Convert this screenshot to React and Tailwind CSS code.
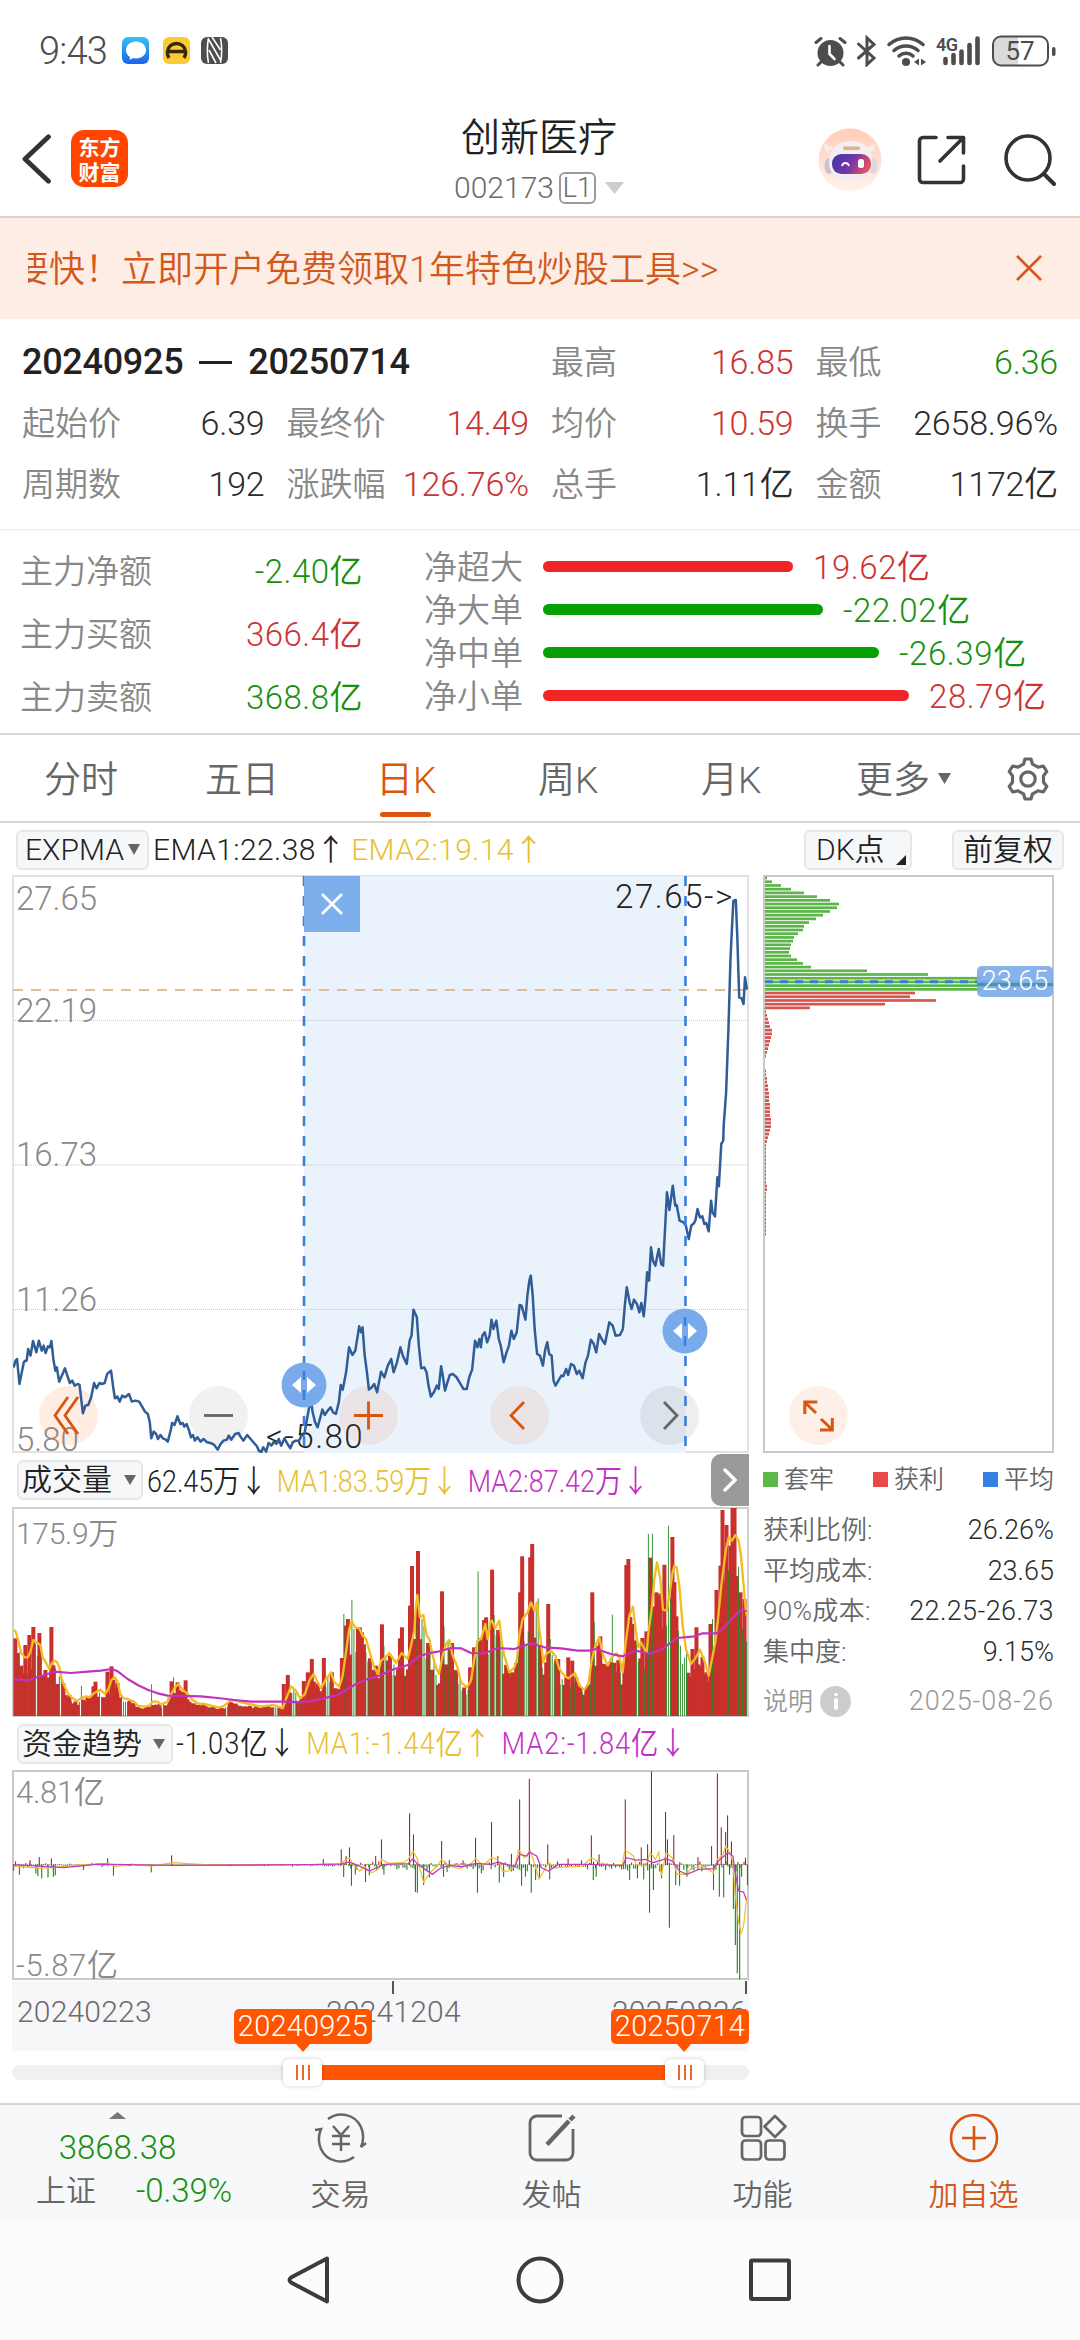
import React from 'react';

// ---------- data ----------
const stats = [
    { label: '起始价', value: '6.39', color: 'text-[#2b2b2b]' },
    { label: '最终价', value: '14.49', color: 'text-[#cb3433]' },
    { label: '均价', value: '10.59', color: 'text-[#cb3433]' },
    { label: '换手', value: '2658.96%', color: 'text-[#2b2b2b]' },
    { label: '周期数', value: '192', color: 'text-[#2b2b2b]' },
    { label: '涨跌幅', value: '126.76%', color: 'text-[#cb3433]' },
    { label: '总手', value: '1.11亿', color: 'text-[#2b2b2b]' },
    { label: '金额', value: '1172亿', color: 'text-[#2b2b2b]' },
];

const mainFlow = [
    { label: '主力净额', value: '-2.40亿', color: 'text-[#17900f]' },
    { label: '主力买额', value: '366.4亿', color: 'text-[#cb3433]' },
    { label: '主力卖额', value: '368.8亿', color: 'text-[#17900f]' },
];

const netFlow = [
    { label: '净超大', value: '19.62亿', bar: 'bg-[#f12525]', color: 'text-[#cb3433]', width: 250 },
    { label: '净大单', value: '-22.02亿', bar: 'bg-[#04a004]', color: 'text-[#17900f]', width: 280 },
    { label: '净中单', value: '-26.39亿', bar: 'bg-[#04a004]', color: 'text-[#17900f]', width: 336 },
    { label: '净小单', value: '28.79亿', bar: 'bg-[#f12525]', color: 'text-[#cb3433]', width: 366 },
];

const pricePoints = '26,715 30,695 33,690 38,765 43,730 47,700 50,695 53,695 56,660 61,680 66,636 73,670 78,635 84,665 88,650 92,672 97,652 101,655 104,636 108,690 112,725 115,715 120,758 127,735 132,718 138,745 142,762 147,755 152,770 158,765 162,768 169,853 174,830 180,828 186,805 192,762 197,778 203,762 208,765 214,762 219,735 227,725 231,770 235,808 240,803 245,818 250,800 256,805 264,795 270,818 277,815 285,818 290,830 297,848 303,855 307,880 310,928 315,908 320,915 324,930 329,918 334,928 340,932 344,938 350,905 353,882 358,888 364,862 370,885 375,882 378,893 383,885 388,905 392,925 396,918 400,935 405,925 412,938 418,930 425,940 432,942 440,948 447,962 453,945 459,935 466,932 470,920 475,932 483,915 490,912 495,925 500,935 508,918 515,930 522,942 528,952 532,965 537,970 541,955 547,968 552,942 558,950 563,938 568,945 573,930 578,950 585,928 591,945 597,958 602,940 608,935 615,935 620,920 626,915 632,865 639,810 643,850 648,880 653,895 658,870 663,842 668,858 674,845 680,835 685,850 691,855 697,820 701,768 705,782 712,730 718,655 725,678 731,665 736,620 739,592 743,610 746,595 750,675 755,730 759,782 765,775 770,765 776,790 784,728 791,745 798,710 805,690 810,730 817,700 824,655 829,680 837,705 843,635 847,620 851,542 858,565 862,650 867,718 873,715 878,730 882,770 887,803 893,790 899,770 903,780 908,712 912,745 916,785 921,760 926,738 932,735 940,745 946,760 954,780 961,780 966,745 972,722 978,635 983,655 987,630 990,655 993,620 998,610 1003,640 1008,620 1012,572 1016,600 1022,575 1027,630 1031,650 1037,700 1043,670 1048,650 1053,605 1058,630 1064,610 1070,528 1074,530 1082,572 1086,500 1090,455 1093,440 1097,500 1101,600 1106,675 1112,680 1118,710 1123,660 1127,640 1131,675 1136,680 1140,755 1144,770 1150,755 1156,740 1160,742 1166,720 1170,738 1176,705 1182,710 1188,735 1193,725 1200,748 1206,700 1211,680 1217,632 1223,645 1228,670 1234,615 1240,632 1246,645 1255,580 1262,590 1268,620 1277,618 1283,600 1287,530 1291,475 1297,520 1301,540 1306,512 1312,525 1317,550 1321,522 1326,562 1330,500 1333,430 1337,455 1341,355 1345,395 1350,410 1357,360 1362,405 1366,410 1370,300 1374,190 1379,243 1386,170 1391,230 1394,228 1400,275 1408,280 1413,290 1419,330 1424,290 1430,282 1433,272 1437,240 1442,265 1447,262 1451,285 1455,282 1460,307 1465,215 1468,250 1473,262 1478,145 1481,172 1486,45 1490,35 1491,-10 1496,-110 1501,-310 1505,-510 1509,-630 1511,-685 1516,-687 1519,-580 1523,-395 1528,-392 1532,-375 1535,-455 1539,-418';

// volume panel, coordinates at 3x with the baseline at 830
const volMa1 = '38,572 45,580 52,605 60,640 70,655 80,655 88,640 97,603 103,608 110,612 118,618 125,655 133,668 145,690 153,672 160,665 168,670 175,685 182,720 192,745 202,765 215,778 228,786 240,778 255,772 265,775 280,762 298,752 312,765 322,750 332,722 342,715 350,730 358,765 368,778 380,780 390,785 400,788 410,800 430,803 445,800 455,788 470,788 480,797 500,788 512,762 522,745 532,735 545,752 560,765 575,783 590,793 610,795 630,800 655,806 670,800 690,783 705,785 720,790 735,793 755,797 780,803 800,800 820,798 845,808 855,780 870,742 885,755 897,778 912,765 925,725 938,705 948,725 960,748 975,720 990,700 1000,730 1015,742 1025,710 1035,640 1045,570 1052,545 1062,565 1075,568 1085,590 1095,600 1105,635 1118,680 1130,705 1140,665 1150,658 1165,642 1185,672 1202,642 1220,660 1230,620 1240,575 1244,510 1249,468 1257,535 1267,528 1277,590 1285,600 1295,650 1305,685 1314,705 1325,650 1335,615 1345,603 1355,650 1368,680 1380,730 1398,745 1410,725 1420,660 1430,605 1440,600 1453,555 1460,600 1468,548 1473,545 1482,568 1495,545 1502,610 1510,650 1525,700 1540,685 1548,660 1555,590 1565,540 1580,520 1590,490 1600,515 1608,490 1615,570 1627,670 1635,645 1650,635 1663,650 1675,690 1690,710 1702,718 1722,702 1735,740 1750,752 1762,735 1772,665 1783,620 1795,595 1805,645 1820,680 1832,655 1846,643 1855,655 1865,700 1873,620 1885,530 1896,503 1905,580 1912,625 1920,610 1930,630 1937,640 1943,575 1952,510 1960,420 1968,370 1978,420 1986,512 1997,515 2005,470 2015,400 2020,380 2027,385 2035,440 2045,560 2055,630 2070,675 2085,655 2097,632 2110,665 2123,710 2133,660 2143,610 2152,530 2162,430 2175,330 2183,295 2193,305 2203,288 2213,305 2220,350 2228,440 2234,510 2237,530';
const volMa2 = '38,722 60,722 80,725 100,717 130,708 160,698 210,702 260,698 300,695 332,690 350,697 380,720 410,738 440,752 470,763 500,770 600,772 650,777 700,783 750,788 850,788 900,790 940,784 980,775 1010,768 1040,750 1070,732 1100,720 1120,715 1140,708 1180,690 1220,678 1255,652 1285,642 1315,637 1350,627 1380,628 1410,642 1450,643 1490,627 1540,630 1590,613 1630,625 1680,628 1730,635 1765,635 1785,630 1830,645 1865,652 1905,635 1945,645 1985,630 2010,610 2030,597 2080,592 2105,583 2145,583 2165,570 2185,548 2215,516 2237,516';
const volUp = '44,598 49,642 61,680 73,618 86,588 97,564 115,582 133,693 151,564 170,735 278,742 284,728 320,698 332,682 512,727 530,730 554,724 847,735 859,708 908,726 920,700 931,660 943,745 967,657 990,700 1021,657 1033,560 1039,540 1069,565 1075,565 1081,580 1123,680 1141,556 1160,665 1165,650 1195,598 1200,565 1225,500 1232,381 1239,600 1249,336 1279,612 1321,457 1345,630 1351,612 1405,685 1418,625 1435,598 1447,543 1453,535 1471,392 1490,573 1555,460 1561,352 1585,355 1591,315 1639,495 1673,660 1700,655 1711,665 1771,460 1789,620 1795,592 1875,378 1880,360 1897,555 1922,597 1934,577 1951,356 1969,460 1975,470 1993,377 2000,533 2017,294 2029,532 2077,630 2089,565 2100,683 2131,555 2149,453 2161,380 2167,213 2174,300 2179,258 2186,320 2197,207 2203,207 2233,480';
const volDown = '55,640 121,620 163,688 241,740 344,745 451,736 517,715 1027,525 1051,482 1057,570 1093,640 1099,668 1147,620 1261,540 1267,560 1327,562 1429,397 1477,528 1495,590 1609,478 1645,600 1777,550 1831,527 1945,285 1957,284 2005,260 2035,575 2041,620 2047,675 2137,540 2215,383 2222,570 2238,608';

// fund trend panel, baseline at 406
const fundBars = '30,396 60,392 79,383 104,387 220,387 352,378 665,389 702,360 712,380 719,354 773,380 785,330 843,252 851,315 909,335 925,392 979,325 1012,278 1053,373 1025,380 1070,210 1090,148 1128,345 1218,318 1234,375 1170,388 1288,210 1321,354 1334,345 1342,126 1371,248 1375,330 1388,317 1438,383 1466,350 1478,132 1486,294 1495,308 1499,258 1507,336 1536,385 26,422 38,434 72,430 76,438 84,445 97,442 108,440 112,436 170,420 232,437 310,427 707,441 723,467 752,456 731,434 760,436 790,434 855,486 859,488 872,465 884,442 913,440 983,488 991,430 1028,458 1037,441 1074,467 1094,488 1082,440 1103,450 1111,447 1132,448 1222,450 1228,440 1297,450 1313,445 1326,448 1338,548 1346,480 1363,445 1379,593 1392,465 1400,467 1415,440 1470,480 1482,500 1491,502 1503,434 1511,537 1515,645 1519,730 1524,748 1528,440 1540,465';
const fundMa1 = '26,410 80,416 110,414 160,407 220,402 235,412 270,404 310,410 355,400 420,406 640,406 700,403 718,385 730,410 740,425 750,412 765,430 780,418 785,390 800,402 830,400 840,390 850,366 858,385 872,458 885,430 900,410 909,390 925,410 945,418 970,402 979,388 995,408 1012,385 1025,390 1035,425 1045,425 1060,412 1068,362 1080,385 1092,365 1100,400 1110,448 1120,425 1130,400 1145,415 1200,410 1218,385 1235,400 1260,408 1282,405 1287,362 1305,380 1310,405 1330,410 1340,370 1350,390 1357,368 1362,440 1372,370 1385,385 1395,435 1415,435 1425,415 1450,412 1470,430 1478,390 1490,375 1495,350 1505,372 1510,400 1515,500 1522,580 1527,612 1532,590 1538,510';
const fundMa2 = '26,406 130,415 200,404 350,408 640,406 700,404 718,398 740,410 760,425 790,405 840,403 850,388 860,405 875,420 890,435 905,418 925,408 950,412 980,402 1010,405 1025,398 1060,412 1070,375 1085,380 1090,368 1105,380 1115,415 1130,425 1150,405 1218,405 1270,408 1283,408 1290,385 1310,392 1330,390 1345,400 1372,388 1385,395 1400,425 1415,435 1440,420 1470,418 1480,395 1500,370 1510,380 1516,440 1522,485 1532,488 1538,512';

const chipsGreen = [2, 7, 16, 26, 39, 52, 65, 74, 72, 65, 58, 51, 44, 39, 38, 33, 29, 28, 26, 25, 24, 26, 32, 38, 46, 102, 163, 215, 256, 288, 217];
const chipsRed = [150, 145, 171, 120, 45, 1, 2, 3, 4, 5, 7, 7, 6, 5, 4, 3, 2, 1, 0, 0, 0, 1, 1, 2, 2, 3, 3, 4, 4, 4, 5, 5, 5, 5, 6, 6, 6, 5, 4, 3, 2, 1, 1, 1, 1, 1, 1, 1, 1, 1, 1, 1, 2, 2, 1, 1, 1, 1, 1, 1, 1, 1, 1, 1, 1, 1];

const parse = (str) => str.split(' ').map((p) => p.split(',').map(Number));
const noise = (i) => {
    const v = Math.sin(i * 12.9898 + 4.1) * 43758.5453;
    return v - Math.floor(v);
};
const valueAt = (line, x) => {
    const i = line.findIndex((p) => p[0] >= x);
    if (i < 0) return line[line.length - 1][1];
    if (i === 0) return line[0][1];
    const [x0, y0] = line[i - 1];
    const [x1, y1] = line[i];
    return y0 + ((y1 - y0) * (x - x0)) / (x1 - x0);
};

const buildVolume = () => {
    const ma = parse(volMa1);
    const bars = [];
    for (let i = 0; i < 366; i++) {
        const x = 43 + i * 6.01;
        const up = noise(i) > 0.36;
        bars.push({ x, up, y: 830 - (830 - valueAt(ma, x)) * (0.68 + noise(i + 500) * 0.32) });
    }
    const put = (list, up) => parse(list).forEach(([x, y]) => {
        const i = Math.min(365, Math.max(0, Math.round((x - 43) / 6.01)));
        bars[i] = { x: bars[i].x, up, y };
    });
    put(volUp, true);
    put(volDown, false);
    return bars;
};

const buildFund = () => {
    const bars = [];
    for (let i = 0; i < 366; i++) {
        const x = 26 + i * 4.14;
        const size = x < 230 ? 12 : x < 660 ? 5 : x < 720 ? 8 : 26;
        bars.push([x, 406 + (noise(i + 90) - 0.4) * size * (noise(i + 33) + 0.4)]);
    }
    return bars.concat(parse(fundBars));
};

const volume = buildVolume();
const fund = buildFund();

// ---------- small pieces ----------
const Caret = ({ className }) => (
    <svg viewBox="0 0 12 10" preserveAspectRatio="none" className={className}><path d="M0 0h12L6 10z" fill="currentColor" /></svg>
);

const StatusBar = () => (
    <div className="flex h-[102px] items-center pl-[39px] pr-[23px] text-[#4d4d4d]">
        <span className="w-[83px] text-[38px] leading-none tracking-[-0.8px]">9:43</span>
        <svg className="h-[28px] w-[108px]" viewBox="0 0 108 28">
            <defs>
                <linearGradient id="msg" x1="0" y1="0" x2="0" y2="1">
                    <stop offset="0" stopColor="#2fc3f8" />
                    <stop offset="1" stopColor="#1f63e6" />
                </linearGradient>
            </defs>
            <rect width="27" height="27" rx="6" fill="url(#msg)" />
            <path d="M14 4.500c6 0 10 3.600 10 8.500s-4 8.500-10 8.500c-1 0-2.200-.1-3.200-.4-1 1-2.200 1.600-3.400 1.700.5-.8.700-1.700.5-2.700C5.500 18.600 4 16 4 13c0-4.900 4-8.500 10-8.500z" fill="#fff" />
            <rect x="41" width="27" height="27" rx="6" fill="#fdca36" />
            <path d="M47 21c-1.500-2-2-4-1.600-6.500C46.200 9.500 50 6.500 54.500 6.500s8.300 3 9.100 8c.4 2.500-.1 4.500-1.600 6.500M47 14.500h15" fill="none" stroke="#33290c" strokeWidth="3.400" />
            <rect x="79" width="27" height="27" rx="6" fill="#4d4d4d" />
            <path d="M86.500 1c-1.500 8-1.500 17 0 25M87 3l12 21M98.500 1c1.500 8 1.500 17 0 25M90 0l8.500 13M87 13l7 13" stroke="#fff" strokeWidth="1.600" fill="none" />
        </svg>
        <svg className="ml-auto h-[32px] w-[244px]" viewBox="0 0 244 32">
            <g fill="#4d4d4d" stroke="#4d4d4d" strokeLinecap="round">
                <circle cx="17.500" cy="18" r="13" stroke="none" />
                <path d="M3 7.500 8 3.500M32 7.500l-5-4M8 27l-3 3M27 27l3 3" strokeWidth="3" />
                <path d="M16.500 11v8l5 5" stroke="#fff" strokeWidth="2.600" fill="none" />
                <path d="M45.500 9 61 23l-7 6.500V3l7 6.500L45.500 23" strokeWidth="3" fill="none" />
                <path d="M76 9.500c10-8.800 24-8.800 34 0M81 15.500c7-6 17-6 24 0M86 21c4-3.600 10-3.600 14 0" strokeWidth="3.500" fill="none" />
                <circle cx="93" cy="27" r="4" stroke="none" />
                <path d="M106 23.500v7l-5-3.500zM108 23.500v7l5-3.500z" stroke="none" />
                <path d="M132.500 24v4M140.500 20v8M148.500 16.500V28M156.500 10v18M164.500 3.500V28" strokeWidth="4.600" />
            </g>
            <text x="123" y="15.500" fontSize="18" fontWeight="600" fill="#4d4d4d" textLength="22">4G</text>
            <path d="M188 2h17v28h-17a8 8 0 0 1-8-8V10a8 8 0 0 1 8-8z" fill="#dadada" />
            <rect x="180" y="1.500" width="55" height="29" rx="8" fill="none" stroke="#4d4d4d" strokeWidth="2" />
            <text x="207" y="25" fontSize="26" fontWeight="400" fill="#4d4d4d" textAnchor="middle">57</text>
            <rect x="239" y="12" width="3.500" height="9" rx="1.700" fill="#4d4d4d" />
        </svg>
    </div>
);

const Header = () => (
    <header className="flex h-[116px] items-center justify-between border-b-2 border-[#d5d5d5] pl-[22px] pr-[24px]">
        <div className="flex w-[300px] items-center gap-[20px]">
            <svg className="h-[50px] w-[29px]" viewBox="0 0 29 50">
                <path d="M26.500 2.800 3 25l23.500 22.200" fill="none" stroke="#333" strokeWidth="4.800" strokeLinecap="round" strokeLinejoin="round" />
            </svg>
            <div className="flex h-[57px] w-[57px] items-center justify-center rounded-[13px] bg-[#ff4500] text-center font-['Noto_Sans_CJK_SC',sans-serif] text-[21px] leading-[25px] font-bold text-white">
                <span>东方<br />财富</span>
            </div>
        </div>
        <div className="flex flex-col items-center pt-[1px]">
            <h1 className="h-[56px] text-[39px] leading-[56px] text-[#222]">创新医疗</h1>
            <div className="flex h-[42px] items-center pt-[2px] text-[30px] leading-none text-[#6b6b6b]">
                <span>002173</span>
                <span className="ml-[5px] flex h-[32px] w-[37px] items-center justify-center rounded-[6px] border-2 border-[#9a9a9a] text-[27px] leading-none">L1</span>
                <Caret className="ml-[9px] h-[12px] w-[19px] text-[#ccc]" />
            </div>
        </div>
        <div className="flex w-[300px] items-center justify-end pt-[3px]">
            <svg className="h-[64px] w-[64px]" viewBox="0 0 64 64">
                <defs>
                    <linearGradient id="halo" x1="0" y1="0" x2="0" y2="1">
                        <stop offset="0" stopColor="#ffcdb5" />
                        <stop offset="1" stopColor="#fff4ee" />
                    </linearGradient>
                    <linearGradient id="visor" x1="0" y1="0" x2="1" y2=".3">
                        <stop offset="0" stopColor="#3b35a8" />
                        <stop offset=".6" stopColor="#7a35a5" />
                        <stop offset="1" stopColor="#e0506a" />
                    </linearGradient>
                </defs>
                <circle cx="32" cy="32" r="31.500" fill="url(#halo)" />
                <path d="M9 24c-3-3-3.500-6-2-9 2 3 5 4 9 4zM54 24c3-3 3-6 2-9-2 3-5 4-9 4z" fill="#f5eeee" />
                <ellipse cx="11" cy="38" rx="4.500" ry="8" fill="#c9c3cd" />
                <ellipse cx="55" cy="38" rx="4.500" ry="8" fill="#dcd6dd" />
                <path d="M11 34c0-13 9-21 22-21s21 8 21 20c0 12-8 19-22 19-13 0-21-6-21-18z" fill="#f1eff2" />
                <rect x="25" y="18.500" width="17" height="3.500" rx="1.700" fill="#e3b08b" />
                <rect x="14" y="26" width="39" height="20" rx="9.500" fill="url(#visor)" />
                <path d="M24 38c1-4 6-4 7 0" stroke="#fff" strokeWidth="1.800" fill="none" />
                <rect x="40" y="31" width="6" height="9" rx="2.500" fill="#fff" />
            </svg>
            <svg className="ml-[35px] h-[50px] w-[50px]" viewBox="0 0 50 50">
                <path d="M19 2.500H6A3.500 3.500 0 0 0 2.500 6v38A3.500 3.500 0 0 0 6 47.500h37a3.500 3.500 0 0 0 3.500-3.500V31M31 2.500h15.500V18M46 3 23 26" fill="none" stroke="#333" strokeWidth="3.600" strokeLinecap="round" strokeLinejoin="round" />
            </svg>
            <svg className="ml-[37px] h-[52px] w-[52px]" viewBox="0 0 52 52">
                <circle cx="24" cy="24" r="22" fill="none" stroke="#333" strokeWidth="3.600" />
                <path d="m40 40 10 10" stroke="#333" strokeWidth="4" strokeLinecap="round" />
            </svg>
        </div>
    </header>
);

const Banner = () => (
    <div className="flex h-[101px] items-center justify-between bg-[#fdede4] pl-[28px] pr-[38px] text-[#d2591b]">
        <div className="overflow-hidden">
            <p className="-ml-[15px] pt-[3px] text-[36px] leading-[54px] whitespace-nowrap">要快！立即开户免费领取1年特色炒股工具&gt;&gt;</p>
        </div>
        <svg className="h-[26px] w-[26px]" viewBox="0 0 26 26"><path d="m1 1 24 24M25 1 1 25" stroke="#d2591b" strokeWidth="2.600" /></svg>
    </div>
);

const Stat = ({ label, value, color }) => (
    <div className="flex items-center justify-between">
        <span className="text-[#888]">{label}</span>
        <span className={`text-[34px] tracking-[-0.2px] ${color}`}>{value}</span>
    </div>
);

const Summary = () => (
    <section className="h-[213px] border-b-2 border-[#f3f3f3] px-[22px] pt-[13px] text-[33px] leading-none">
        <div className="grid grid-cols-4 auto-rows-[61px] gap-x-[22px]">
            <div className="col-span-2 flex items-center gap-[16px] text-[36px] font-medium tracking-[-0.3px] text-[#222]">
                <span>20240925</span>
                <span className="h-[3px] w-[33px] bg-[#222]"></span>
                <span>20250714</span>
            </div>
            <Stat label="最高" value="16.85" color="text-[#cb3433]" />
            <Stat label="最低" value="6.36" color="text-[#17900f]" />
            {stats.map((s) => <Stat key={s.label} {...s} />)}
        </div>
    </section>
);

const Flow = () => (
    <section className="flex h-[204px] border-b-2 border-[#d9d9d9] pl-[20px] text-[33px] leading-none">
        <div className="w-[343px] pt-[9px]">
            {mainFlow.map((f) => (
                <div key={f.label} className="flex h-[63px] items-center justify-between">
                    <span className="text-[#888]">{f.label}</span>
                    <span className={`tracking-[0.5px] ${f.color}`}>{f.value}</span>
                </div>
            ))}
        </div>
        <div className="ml-[61px] pt-[15px]">
            {netFlow.map((f) => (
                <div key={f.label} className="flex h-[43px] items-center">
                    <span className="w-[119px] text-[#888]">{f.label}</span>
                    <span className={`mb-[2px] h-[11px] rounded-full ${f.bar}`} style={{ width: f.width }}></span>
                    <span className={`ml-[20px] tracking-[0.6px] ${f.color}`}>{f.value}</span>
                </div>
            ))}
        </div>
    </section>
);

const Tabs = () => (
    <nav className="flex h-[88px] items-center border-b-2 border-[#d5d5d5] pl-[44px] text-[37px] leading-[86px] text-[#666]">
        <span className="w-[161px] pt-[5px]">分时</span>
        <span className="w-[171px] pt-[5px]">五日</span>
        <span className="relative w-[162px] pt-[5px] text-[#d9560f]">
            日K
            <i className="absolute bottom-[7px] left-[4px] h-[5px] w-[51px] rounded-full bg-[#d9560f]"></i>
        </span>
        <span className="w-[163px] pt-[5px]">周K</span>
        <span className="w-[155px] pt-[5px]">月K</span>
        <span className="pt-[5px]">更多</span>
        <Caret className="ml-[8px] h-[11px] w-[13px] text-[#666]" />
        <svg className="mt-[2px] ml-[55px] h-[44px] w-[44px]" viewBox="0 0 44 44" fill="none" stroke="#666" strokeWidth="3.200" strokeLinejoin="round">
            <path d="M19 2h6l1.500 5.200 5.500 3 5.300-1.200 3.500 5.500-3.300 4.200v6.600l3.300 4.200-3.500 5.500-5.300-1.200-5.500 3L25 42h-6l-1.500-5.200-5.500-3L6.700 35l-3.500-5.500 3.300-4.200v-6.600l-3.300-4.200L6.700 9l5.300 1.200 5.500-3z" />
            <circle cx="22" cy="22" r="7.200" />
        </svg>
    </nav>
);

const ToolButton = ({ className, children }) => (
    <div className={`absolute top-[509px] h-[59px] w-[59px] ${className}`}>
        <svg viewBox="0 0 59 59" fill="none" strokeWidth="2.800">{children}</svg>
    </div>
);

const Handle = ({ className }) => (
    <svg className={`absolute h-[46px] w-[46px] ${className}`} viewBox="0 0 46 46">
        <circle cx="23" cy="23" r="22.500" fill="#79abec" />
        <path d="M20 15v16l-9-8zM26 15v16l9-8z" fill="#fff" />
        <path d="M23 9v9M23 28v10" stroke="#3a7fdb" strokeWidth="2.500" />
    </svg>
);

const PriceChart = () => (
    <div className="relative h-[578px] w-[737px] border-2 border-[#e2e2e2] text-[33px] leading-none text-[#8a8a8a]">
        <svg className="absolute -top-[1px] -left-[1px] h-[577px] w-[736px]" viewBox="0 0 736 577">
            <rect x="291" y="0" width="381.500" height="577" fill="#eaf2fc" />
            <path d="M0 144.500h736M0 289h736M0 433.500h736" stroke="#c9c9c9" strokeWidth="1" strokeDasharray="1 1" />
        </svg>
        <span className="absolute top-[5px] left-[2px]">27.65</span>
        <span className="absolute top-[117px] left-[2px]">22.19</span>
        <span className="absolute top-[261px] left-[2px]">16.73</span>
        <span className="absolute top-[406px] left-[2px]">11.26</span>
        <span className="absolute top-[546px] left-[2px]">5.80</span>
        <span className="absolute top-[3px] left-[601px] tracking-[1.6px] text-[#222]">27.65-&gt;</span>
        <span className="absolute top-[543px] left-[252px] tracking-[1.5px] text-[#222]">&lt;-5.80</span>
        <ToolButton className="left-[25px]">
            <circle cx="29.500" cy="29.500" r="29.500" fill="#ff6a1f" fillOpacity=".12" />
            <path d="M29 11 16 29.500 29 48M39 11 26 29.500 39 48" stroke="#d9560f" />
        </ToolButton>
        <ToolButton className="left-[175px]">
            <circle cx="29.500" cy="29.500" r="29.500" fill="#888" fillOpacity=".12" />
            <path d="M15 29.500h29" stroke="#666" />
        </ToolButton>
        <ToolButton className="left-[325px]">
            <circle cx="29.500" cy="29.500" r="29.500" fill="#f07030" fillOpacity=".1" />
            <path d="M15 29.500h29M29.500 15.500v28" stroke="#d9560f" />
        </ToolButton>
        <ToolButton className="left-[476px]">
            <circle cx="29.500" cy="29.500" r="29.500" fill="#f07030" fillOpacity=".1" />
            <path d="M34 16 21 29.500 34 43" stroke="#d9560f" />
        </ToolButton>
        <ToolButton className="left-[626px]">
            <circle cx="29.500" cy="29.500" r="29.500" fill="#666" fillOpacity=".11" />
            <path d="M24 16 37 29.500 24 43" stroke="#666" />
        </ToolButton>
        <svg className="absolute -top-[1px] -left-[1px] h-[577px] w-[736px]" viewBox="0 0 736 577">
            <path d="M0 114h736" stroke="#d3ab7e" strokeWidth="1.500" strokeDasharray="10 8" />
            <g transform="translate(-12 253) scale(.4847 .3333)">
                <polyline points={pricePoints} fill="none" stroke="#315d97" strokeWidth="2.500" vectorEffect="non-scaling-stroke" strokeLinejoin="round" />
            </g>
            <path d="M291 0v577M672.500 0v577" stroke="#3a7fdb" strokeWidth="2.600" strokeDasharray="10 10" />
        </svg>
        <div className="absolute -top-[1px] left-[290px] flex h-[56px] w-[56px] items-center justify-center bg-[#7eafed]">
            <svg className="h-[22px] w-[22px]" viewBox="0 0 22 22"><path d="m1 1 20 20M21 1 1 21" stroke="#fff" strokeWidth="2.800" /></svg>
        </div>
        <Handle className="top-[485px] left-[267px]" />
        <Handle className="top-[431px] left-[648px]" />
    </div>
);

const VolumeChart = () => (
    <div className="relative h-[210px] w-[737px] border-2 border-[#cfcfcf]">
        <svg className="absolute -top-[1px] -left-[1px] h-[209px] w-[736px]" viewBox="0 0 736 209">
            <g transform="translate(-12 -69) scale(.33333)">
                {volume.filter((b) => b.up).map((b) => (
                    <rect key={b.x} x={b.x - 6} y={b.y} width="12" height={831 - b.y} fill="#c9302c" />
                ))}
                {volume.filter((b) => !b.up).map((b) => (
                    <rect key={b.x} x={b.x - 1.5} y={b.y} width="3" height={831 - b.y} fill="#1a801a" fillOpacity=".85" />
                ))}
                <polyline points={volMa1} fill="none" stroke="#f2bd24" strokeWidth="7" strokeLinejoin="round" />
                <polyline points={volMa2} fill="none" stroke="#c332bf" strokeWidth="6.500" strokeLinejoin="round" />
            </g>
        </svg>
        <span className="absolute top-[10px] left-[2px] text-[30px] leading-none tracking-[-0.3px] text-[#8a8a8a]">175.9万</span>
    </div>
);

const FundChart = () => (
    <div className="relative h-[210px] w-[737px] border-2 border-[#c9c9c9] text-[31px] leading-none text-[#8a8a8a]">
        <svg className="absolute -top-[1px] -left-[1px] h-[209px] w-[736px]" viewBox="0 0 736 209">
            <g transform="translate(-12 -41.600) scale(.4847 .3333)">
                {fund.map(([x, y], i) => (
                    <rect key={i} x={x - 1.1} y={Math.min(y, 405)} width="2.200" height={Math.abs(y - 405) + 2} fill={y < 406 ? '#982626' : '#178017'} />
                ))}
                <polyline points={fundMa1} fill="none" stroke="#f0bd2c" strokeWidth="1.200" vectorEffect="non-scaling-stroke" />
                <polyline points={fundMa2} fill="none" stroke="#c33cc0" strokeWidth="1.300" vectorEffect="non-scaling-stroke" />
            </g>
        </svg>
        <span className="absolute top-[5px] left-[2px] tracking-[-0.3px]">4.81亿</span>
        <span className="absolute bottom-[-3px] left-[2px] tracking-[0.6px]">-5.87亿</span>
    </div>
);

const IndicatorChip = ({ children, className }) => (
    <div className={`flex h-[40px] shrink-0 items-center rounded-[6px] border-2 border-[#e5e7ea] bg-[#f6f7f9] text-[30px] leading-none text-[#222] ${className}`}>{children}</div>
);

const DateTag = ({ className, children }) => (
    <div className={`absolute top-[28px] flex h-[35px] w-[138px] items-center justify-center rounded-[5px] bg-[#ff5500] text-[29px] leading-none text-white ${className}`}>{children}</div>
);

const Thumb = ({ className }) => (
    <div className={`absolute -top-[6px] flex h-[27px] w-[39px] items-center justify-center gap-[4px] rounded-[6px] bg-white shadow-[0_0_4px_rgba(0,0,0,0.2)] ${className}`}>
        <i className="h-[15px] w-[2px] bg-[#e8682a]"></i>
        <i className="h-[15px] w-[2px] bg-[#e8682a]"></i>
        <i className="h-[15px] w-[2px] bg-[#e8682a]"></i>
    </div>
);

const TimeAxis = () => (
    <div className="relative mt-[1px] h-[122px]">
        <div className="relative h-[70px] bg-[#f7f7fa] text-[30px] leading-none tracking-[0.2px] text-[#6b6b6b]">
            <i className="absolute top-0 left-[380px] h-[13px] w-[2px] bg-[#555]"></i>
            <i className="absolute top-0 left-[733px] h-[13px] w-[2px] bg-[#555]"></i>
            <span className="absolute top-[16px] left-[5px]">20240223</span>
            <span className="absolute top-[16px] left-[314px]">20241204</span>
            <span className="absolute top-[16px] left-[600px]">20250826</span>
            <DateTag className="left-[222px]">20240925</DateTag>
            <DateTag className="left-[599px]">20250714</DateTag>
            <Caret className="absolute top-[63px] left-[284px] h-[8px] w-[14px] text-[#ff5500]" />
            <Caret className="absolute top-[63px] left-[665px] h-[8px] w-[14px] text-[#ff5500]" />
        </div>
        <div className="relative mt-[14px] h-[15px] rounded-full bg-[#f0f0f3]">
            <div className="absolute left-[291px] h-[15px] w-[381px] bg-[#ff5500]"></div>
            <Thumb className="left-[271px]" />
            <Thumb className="left-[653px]" />
        </div>
    </div>
);

const ChipPanel = () => (
    <div className="ml-[14px] w-[291px]">
        <div className="relative h-[578px] w-[291px] border-2 border-[#c9c9c9]">
            <svg className="absolute -top-[1px] -left-[1px] h-[577px] w-[290px]" viewBox="0 0 290 577">
                {chipsGreen.map((w, i) => <rect key={i} x="1" y={0.7 + i * 3.71} width={w} height="2.700" fill="#5cb548" />)}
                {chipsRed.map((w, i) => <rect key={i} x="1" y={115.7 + i * 3.71} width={w} height="2.700" fill="#d9534f" />)}
                <path d="M1 105.700h214" stroke="#3a80c8" strokeWidth="3" strokeDasharray="8 7" />
            </svg>
            <div className="absolute top-[89px] right-[-1px] flex h-[31px] w-[76px] items-center justify-center rounded-[5px] bg-[#7aaaea]/90 text-[27px] leading-none text-white">
                <i className="absolute top-[17px] left-0 h-[3px] w-[76px] bg-[#4a93ae]"></i>
                <span className="relative">23.65</span>
            </div>
            <ToolButton className="left-[24px]">
                <circle cx="29.500" cy="29.500" r="29.500" fill="#fef0e8" />
                <path d="M27 27 16 16.500M15.800 28V16h12.500M32 33l11 10.500M43.300 32v12H31" stroke="#d9560f" strokeWidth="3" />
            </ToolButton>
        </div>
        <div className="flex h-[52px] items-center justify-between text-[25px] leading-none text-[#666]">
            <span className="flex items-center gap-[6px]"><i className="h-[15px] w-[15px] bg-[#5cb947]"></i>套牢</span>
            <span className="flex items-center gap-[6px]"><i className="h-[15px] w-[15px] bg-[#e84a4a]"></i>获利</span>
            <span className="flex items-center gap-[6px]"><i className="h-[15px] w-[15px] bg-[#3580e0]"></i>平均</span>
        </div>
        <dl className="mt-[5px] text-[26px] leading-[40.600px] text-[#666]">
            <div className="flex justify-between"><dt>获利比例:</dt><dd className="text-[27px] text-[#2b2b2b]">26.26%</dd></div>
            <div className="flex justify-between"><dt>平均成本:</dt><dd className="text-[27px] text-[#2b2b2b]">23.65</dd></div>
            <div className="flex justify-between"><dt className="tracking-[0.4px]">90%成本:</dt><dd className="text-[27px] tracking-[0.4px] text-[#2b2b2b]">22.25-26.73</dd></div>
            <div className="flex justify-between"><dt>集中度:</dt><dd className="text-[27px] text-[#2b2b2b]">9.15%</dd></div>
        </dl>
        <div className="mt-[9px] flex h-[40px] items-center text-[25px] leading-none text-[#999]">
            <span>说明</span>
            <i className="ml-[7px] flex h-[31px] w-[31px] flex-col items-center justify-center gap-[2px] rounded-full bg-[#ccc]">
                <b className="h-[3px] w-[4px] rounded-full bg-white"></b>
                <b className="h-[12px] w-[4px] rounded-full bg-white"></b>
            </i>
            <span className="ml-auto text-[27px] tracking-[1px]">2025-08-26</span>
        </div>
    </div>
);

const Charts = () => (
    <section>
        <div className="flex h-[52px] items-center pt-[1px] pl-[16px] text-[30px] leading-none">
            <IndicatorChip className="w-[133px] gap-[4px] pl-[7px]">EXPMA<Caret className="h-[11px] w-[12px] text-[#666]" /></IndicatorChip>
            <span className="ml-[4px] tracking-[0.4px] text-[#222]">EMA1:22.38↑</span>
            <span className="ml-[5px] tracking-[0.4px] text-[#e8bf32]">EMA2:19.14↑</span>
            <IndicatorChip className="relative ml-auto w-[108px] pl-[10px]">
                DK点
                <svg className="absolute right-[4px] bottom-[3px] h-[10px] w-[10px]" viewBox="0 0 10 10"><path d="M10 0v10H0z" fill="#222" /></svg>
            </IndicatorChip>
            <IndicatorChip className="mr-[16px] ml-[40px] w-[112px] justify-center">前复权</IndicatorChip>
        </div>
        <div className="flex pl-[12px]">
            <div className="w-[737px]">
                <PriceChart />
                <div className="relative flex h-[54px] items-center pl-[5px]">
                    <IndicatorChip className="w-[126px] gap-[12px] pl-[3px]">成交量<Caret className="h-[10px] w-[12px] text-[#666]" /></IndicatorChip>
                    <p className="ml-[4px] flex origin-left scale-x-[0.87] gap-[11px] pt-[2px] text-[31px] leading-none whitespace-nowrap">
                        <span className="text-[#222]">62.45万↓</span>
                        <span className="text-[#e8bf32]">MA1:83.59万↓</span>
                        <span className="text-[#c22fc6]">MA2:87.42万↓</span>
                    </p>
                    <div className="absolute top-[1px] right-0 flex h-[52px] w-[38px] items-center justify-center rounded-l-[10px] bg-[#999]">
                        <svg className="h-[24px] w-[14px]" viewBox="0 0 14 24"><path d="m2 2 10 10L2 22" fill="none" stroke="#fff" strokeWidth="3.500" strokeLinecap="round" /></svg>
                    </div>
                </div>
                <VolumeChart />
                <div className="flex h-[53px] items-center pl-[5px]">
                    <IndicatorChip className="w-[156px] gap-[11px] pl-[3px]">资金趋势<Caret className="h-[10px] w-[12px] text-[#666]" /></IndicatorChip>
                    <p className="ml-[3px] flex origin-left scale-x-[0.88] gap-[11px] text-[31px] leading-none tracking-[1px] whitespace-nowrap">
                        <span className="text-[#222]">-1.03亿↓</span>
                        <span className="text-[#e8bf32]">MA1:-1.44亿↑</span>
                        <span className="text-[#c22fc6]">MA2:-1.84亿↓</span>
                    </p>
                </div>
                <FundChart />
                <TimeAxis />
            </div>
            <ChipPanel />
        </div>
    </section>
);

const BottomBar = () => (
    <footer className="flex h-[117px] border-t-2 border-[#d0d6dd] bg-[#f7f8fa] text-[30px] leading-none text-[#666]">
        <div className="flex w-[235px] flex-col items-center pt-[7px]">
            <Caret className="h-[7px] w-[17px] rotate-180 text-[#777]" />
            <span className="mt-[12px] text-[33px] text-[#17900f]">3868.38</span>
            <div className="mt-[10px] ml-[33px] flex w-[196px] items-center justify-between">
                <span>上证</span>
                <span className="text-[33px] tracking-[-0.1px] text-[#17900f]">-0.39%</span>
            </div>
        </div>
        <div className="flex w-[211px] flex-col items-center gap-[17px] pt-[8px]">
            <svg className="h-[50px] w-[58px]" viewBox="0 0 58 50" fill="none" stroke="#666" strokeWidth="2.500">
                <path d="M16 6C27-2 43 1 49 14c3 7 3 13 0 20l5-4M42 44C31 52 15 49 9 36c-3-7-3-13 0-20l-6 1" />
                <path d="m21 13 8 9 8-9M29 22v16M20 23h18M20 31h18" />
            </svg>
            <span>交易</span>
        </div>
        <div className="flex w-[211px] flex-col items-center gap-[17px] pt-[8px]">
            <svg className="h-[50px] w-[50px]" viewBox="0 0 50 50" fill="none" stroke="#666" strokeWidth="2.800">
                <path d="M35 3H10a7 7 0 0 0-7 7v30a7 7 0 0 0 7 7h29a7 7 0 0 0 7-7V16" />
                <path d="M20 31.500 42 8" strokeWidth="4.500" />
                <path d="m43 7 4-4" strokeWidth="4.500" />
            </svg>
            <span>发帖</span>
        </div>
        <div className="flex w-[211px] flex-col items-center gap-[17px] pt-[8px]">
            <svg className="h-[50px] w-[50px]" viewBox="0 0 50 50" fill="none" stroke="#666" strokeWidth="2.700" strokeLinejoin="round">
                <rect x="4" y="4" width="19" height="19" rx="3.500" />
                <rect x="4" y="27.500" width="19" height="19" rx="3.500" />
                <rect x="27.500" y="27.500" width="19" height="19" rx="3.500" />
                <path d="m37 3 10.500 10.500L37 24 26.500 13.500z" />
            </svg>
            <span>功能</span>
        </div>
        <div className="flex w-[211px] flex-col items-center gap-[17px] pt-[8px] text-[#d2591b]">
            <svg className="h-[50px] w-[50px]" viewBox="0 0 50 50" fill="none" stroke="#d9560f" strokeWidth="2.600">
                <circle cx="25" cy="25" r="23" />
                <path d="M25 13v24M13 25h24" />
            </svg>
            <span>加自选</span>
        </div>
    </footer>
);

const SystemNav = () => (
    <div className="flex h-[120px] items-center bg-[#fcfcfc]">
        <svg className="ml-[286px] h-[50px] w-[46px]" viewBox="0 0 46 50"><path d="M41 3.500v43L5 27.500c-2-1.500-2-3.500 0-5z" fill="none" stroke="#3c3c3c" strokeWidth="4" strokeLinejoin="round" /></svg>
        <svg className="ml-[184px] h-[48px] w-[48px]" viewBox="0 0 48 48"><circle cx="24" cy="24" r="21.500" fill="none" stroke="#3c3c3c" strokeWidth="4" /></svg>
        <svg className="ml-[183px] h-[46px] w-[46px]" viewBox="0 0 46 46"><rect x="4" y="3.500" width="38" height="38.500" rx="1" fill="none" stroke="#3c3c3c" strokeWidth="4" /></svg>
    </div>
);

const App = () => {
    return (
        <div className="flex h-[2340px] w-[1080px] flex-col overflow-hidden bg-white font-['Roboto','Noto_Sans_CJK_SC',sans-serif] font-[350]">
            <StatusBar />
            <Header />
            <Banner />
            <Summary />
            <Flow />
            <Tabs />
            <Charts />
            <div className="mt-auto">
                <BottomBar />
                <SystemNav />
            </div>
        </div>
    );
};

export default App;
